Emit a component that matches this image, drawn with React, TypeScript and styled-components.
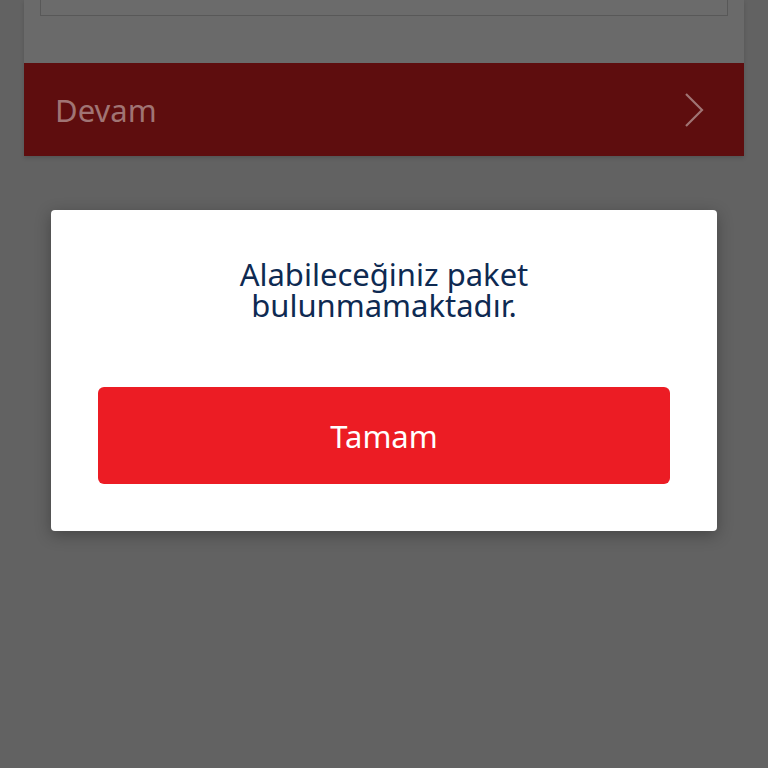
import styled, { createGlobalStyle } from "styled-components";

// ||||||||||||||||||||||||||||| Global ||||||||||||||||||||||||||||||||||||

const GlobalStyle = createGlobalStyle`
  html, body {
    margin: 0;
    padding: 0;
    background: #626262;
  }
  * {
    box-sizing: border-box;
  }
`;

// ||||||||||||||||||||||||||||| Page behind the dialog ||||||||||||||||||||||||||||||||||||

const Page = styled.div`
  position: relative;
  width: 768px;
  height: 768px;
  overflow: hidden;
  background: #626262;
  font-family: "Noto Sans", "Open Sans", sans-serif;
`;

const Card = styled.div`
  margin: 0 24px;
  background: #6a6a6a;
  display: flex;
  flex-direction: column;
  box-shadow: 0 2px 4px rgba(0, 0, 0, 0.15);
`;

const CardBody = styled.div`
  padding: 0 16px 47px;
`;

const InputBox = styled.div`
  height: 17px;
  margin-top: -1px;
  border: 1px solid #585858;
  border-top: none;
  background: #6b6b6b;
`;

const ContinueBar = styled.div`
  height: 93px;
  background: #5e0d0e;
  display: flex;
  align-items: center;
  justify-content: space-between;
  padding: 0 40px 0 31px;
  color: #a07474;
  font-size: 31px;
`;

// ||||||||||||||||||||||||||||| Dialog ||||||||||||||||||||||||||||||||||||

const Backdrop = styled.div`
  position: absolute;
  inset: 0;
  display: flex;
  justify-content: center;
  padding-top: 210px;
`;

const Dialog = styled.div`
  width: 666px;
  height: 321px;
  background: #ffffff;
  border-radius: 4px;
  box-shadow: 0 4px 16px rgba(0, 0, 0, 0.3);
  display: flex;
  flex-direction: column;
  align-items: center;
  padding: 49px 47px 0;
`;

const Message = styled.p`
  margin: 0;
  color: #0e2a52;
  font-size: 31px;
  line-height: 31px;
  text-align: center;
  font-weight: 400;
`;

const OkButton = styled.button`
  margin-top: 66px;
  width: 572px;
  height: 97px;
  border: none;
  border-radius: 6px;
  background: #ec1c24;
  color: #ffffff;
  font-family: inherit;
  font-size: 31px;
  cursor: pointer;
`;

// ||||||||||||||||||||||||||||| App ||||||||||||||||||||||||||||||||||||

const Chevron = () => (
  <svg width="20" height="34" viewBox="0 0 20 34" fill="none">
    <path d="M2 1 L18 17 L2 33" stroke="#a07474" strokeWidth="2.2" />
  </svg>
);

export default function App() {
  return (
    <>
      <GlobalStyle />
      <Page>
        <Card>
          <CardBody>
            <InputBox />
          </CardBody>
          <ContinueBar>
            <span>Devam</span>
            <Chevron />
          </ContinueBar>
        </Card>
        <Backdrop>
          <Dialog>
            <Message>
              Alabileceğiniz paket
              <br />
              bulunmamaktadır.
            </Message>
            <OkButton>Tamam</OkButton>
          </Dialog>
        </Backdrop>
      </Page>
    </>
  );
}
